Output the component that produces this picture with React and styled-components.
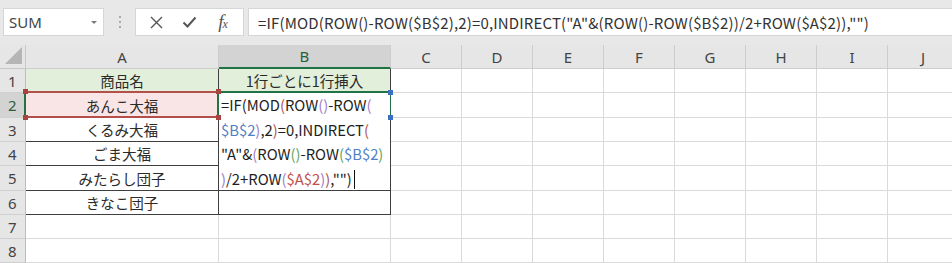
import React from "react";
import styled, { createGlobalStyle, css } from "styled-components";

const GREEN = "#217346";
const GRID = "#dadada";
const EDGE = "#3f3f3f";

const Global = createGlobalStyle`
  html, body {
    margin: 0;
    background: #ffffff;
    overflow: hidden;
  }
  body {
    font-family: "Noto Sans CJK JP", "Noto Sans", sans-serif;
    color: #222;
  }
`;

const Page = styled.div`
  width: 952px;
  height: 263px;
  overflow: hidden;
`;

const Toolbar = styled.div`
  display: flex;
  align-items: center;
  height: 45px;
  padding: 0 0 1px 3px;
  box-sizing: border-box;
  background: #e8e8e8;
`;

const Field = styled.div`
  display: flex;
  align-items: center;
  height: 28px;
  box-sizing: border-box;
  background: #ffffff;
  border: 1px solid #d6d6d6;
`;

const NameBox = styled(Field)`
  width: 101px;
  padding: 0 6px 0 5px;
  justify-content: space-between;
`;

const NameText = styled.span`
  font-family: "Noto Sans", sans-serif;
  font-size: 15px;
  color: #444;
`;

const DropArrow = styled.span`
  width: 0;
  height: 0;
  border-left: 3px solid transparent;
  border-right: 3px solid transparent;
  border-top: 3px solid #7a7a7a;
`;

const Grip = styled.div`
  width: 31px;
  display: flex;
  flex-direction: column;
  align-items: center;
  gap: 3px;

  span {
    width: 2px;
    height: 2px;
    background: #a8a8a8;
  }
`;

const FxBox = styled(Field)`
  width: 109px;
  justify-content: space-around;
  padding: 0 4px;
`;

const IconSlot = styled.span`
  width: 20px;
  display: flex;
  justify-content: center;
  color: #555;
`;

const FxGlyph = styled.span`
  font-family: "Liberation Serif", serif;
  font-style: italic;
  font-size: 19px;
  color: #555;
  letter-spacing: -1px;

  small {
    font-size: 12px;
  }
`;

const FormulaBox = styled(Field)`
  flex: 1;
  margin-left: 4px;
  padding-left: 9px;
  border-right: none;
  font-size: 15px;
  letter-spacing: 0.15px;
  color: #333;
  white-space: nowrap;
`;

const Sheet = styled.div`
  display: grid;
  grid-template-columns: 26px 193px 172px repeat(8, 71px);
  grid-template-rows: 24px 24px 25px 24px 24px 25px 24px 24px 24px;
  font-size: 14.5px;
`;

const headBase = css`
  display: flex;
  align-items: center;
  justify-content: center;
  box-sizing: border-box;
  font-family: "Noto Sans", sans-serif;
  font-size: 15px;
  color: #444;
`;

const Corner = styled.div`
  position: relative;
  background: #e6e6e6;
  border-right: 1px solid #c8c8c8;
  border-bottom: 1px solid #c8c8c8;

  &::after {
    content: "";
    position: absolute;
    right: 3px;
    bottom: 4px;
    border-left: 17px solid transparent;
    border-bottom: 17px solid #b5b5b5;
  }
`;

const ColHead = styled.div`
  ${headBase};
  background: ${(p) => (p.$active ? "#d3d3d3" : "#e6e6e6")};
  color: ${(p) => (p.$active ? "#2b5f3c" : "#444")};
  border-right: 1px solid #cdcdcd;
  border-bottom: ${(p) => (p.$active ? `2px solid ${GREEN}` : "1px solid #cdcdcd")};
`;

const RowHead = styled.div`
  ${headBase};
  justify-content: flex-start;
  padding-left: 8px;
  background: ${(p) => (p.$active ? "#d3d3d3" : "#e6e6e6")};
  color: ${(p) => (p.$active ? "#2b5f3c" : "#444")};
  border-right: ${(p) => (p.$active ? `2px solid ${GREEN}` : "1px solid #bdbdbd")};
  border-bottom: 1px solid #d0d0d0;
`;

const Cell = styled.div`
  position: relative;
  display: flex;
  align-items: center;
  justify-content: center;
  box-sizing: border-box;
  background: ${(p) => p.$fill || "#ffffff"};
  border-right: 1px solid ${(p) => (p.$boxed ? EDGE : GRID)};
  border-bottom: 1px solid ${(p) => (p.$boxed ? EDGE : GRID)};
  white-space: nowrap;
  color: #2a2a2a;
`;

const Handle = styled.i`
  position: absolute;
  width: 5px;
  height: 5px;
  background: ${(p) => p.$color};
  z-index: 3;
`;

const RefFrame = styled.span`
  position: absolute;
  left: -1px;
  right: -1px;
  top: -2px;
  bottom: -1px;
  border-top: 2px solid #b4504c;
  border-bottom: 2px solid #b4504c;
  z-index: 2;
`;

const Editor = styled.div`
  position: relative;
  grid-row: span 4;
  box-sizing: border-box;
  background: #ffffff;
  border-right: 1px solid ${EDGE};
  border-bottom: 1px solid ${EDGE};
  padding-left: 2px;
  font-size: 14.8px;
  line-height: 24.5px;
  color: #1e1e1e;
  white-space: nowrap;

  &::before {
    content: "";
    position: absolute;
    left: -2px;
    right: -2px;
    top: -2px;
    height: 26px;
    border: 2px solid ${GREEN};
    border-bottom: none;
    box-sizing: border-box;
  }
`;

const Line = styled.div`
  height: 24.5px;
`;

const Tok = styled.span`
  color: ${(p) => p.$c};
`;

const Caret = styled.span`
  display: inline-block;
  width: 1px;
  height: 19px;
  margin-left: 2px;
  background: #111;
  vertical-align: -4px;
`;

const C = {
  k: "#1e1e1e",
  m: "#b0544e",
  p: "#a07ccb",
  b: "#4f7fc6",
  g: "#5da65d",
  r: "#c0504d",
};

const lines = [
  [["=IF(MOD", "k"], ["(", "m"], ["ROW", "k"], ["()", "p"], ["-ROW", "k"], ["(", "p"]],
  [["$B$2", "b"], [")", "p"], [",2", "k"], [")", "m"], ["=0,INDIRECT", "k"], ["(", "m"]],
  [['"A"&', "k"], ["(", "p"], ["ROW", "k"], ["()", "g"], ["-ROW", "k"], ["(", "g"], ["$B$2", "b"], [")", "g"]],
  [[")", "p"], ["/2+ROW", "k"], ["(", "p"], ["$A$2", "r"], [")", "p"], [")", "m"], [',""', "k"], [")", "k"]],
];

const formula = '=IF(MOD(ROW()-ROW($B$2),2)=0,INDIRECT("A"&(ROW()-ROW($B$2))/2+ROW($A$2)),"")';

const letters = ["A", "B", "C", "D", "E", "F", "G", "H", "I", "J"];
const items = ["商品名", "あんこ大福", "くるみ大福", "ごま大福", "みたらし団子", "きなこ団子"];

const CrossIcon = () => (
  <svg width="13" height="13" viewBox="0 0 13 13">
    <path d="M1 1L12 12M12 1L1 12" stroke="#555" strokeWidth="1.4" fill="none" />
  </svg>
);

const CheckIcon = () => (
  <svg width="15" height="12" viewBox="0 0 15 12">
    <path d="M1.5 6.5L5.5 10.5L13.5 1.5" stroke="#555" strokeWidth="2" fill="none" />
  </svg>
);

function ColumnA({ row }) {
  if (row > 6) return <Cell />;
  if (row === 1) return <Cell $boxed $fill="#e2efda">{items[0]}</Cell>;
  if (row === 2)
    return (
      <Cell $boxed $fill="#f9e5e5">
        <RefFrame />
        <Handle $color="#a8443f" style={{ left: -3, top: -4 }} />
        <Handle $color="#a8443f" style={{ right: -3, top: -4 }} />
        <Handle $color="#a8443f" style={{ left: -3, bottom: -3 }} />
        <Handle $color="#a8443f" style={{ right: -3, bottom: -3 }} />
        {items[1]}
      </Cell>
    );
  return <Cell $boxed>{items[row - 1]}</Cell>;
}

function ColumnB({ row }) {
  if (row === 1)
    return (
      <Cell $boxed $fill="#e2efda">
        1行ごとに1行挿入
      </Cell>
    );
  if (row === 2)
    return (
      <Editor>
        {lines.map((ln, i) => (
          <Line key={i}>
            {ln.map(([t, c], j) => (
              <Tok key={j} $c={C[c]}>
                {t}
              </Tok>
            ))}
            {i === lines.length - 1 && <Caret />}
          </Line>
        ))}
        <Handle $color="#3b6fc4" style={{ right: -3, top: -3 }} />
        <Handle $color="#3b6fc4" style={{ right: -3, top: 22 }} />
      </Editor>
    );
  if (row >= 3 && row <= 5) return null;
  if (row === 6) return <Cell $boxed />;
  return <Cell />;
}

export default function App() {
  const rows = [1, 2, 3, 4, 5, 6, 7, 8];
  return (
    <Page>
      <Global />
      <Toolbar>
        <NameBox>
          <NameText>SUM</NameText>
          <DropArrow />
        </NameBox>
        <Grip>
          <span />
          <span />
          <span />
        </Grip>
        <FxBox>
          <IconSlot>
            <CrossIcon />
          </IconSlot>
          <IconSlot>
            <CheckIcon />
          </IconSlot>
          <IconSlot>
            <FxGlyph>
              f<small>x</small>
            </FxGlyph>
          </IconSlot>
        </FxBox>
        <FormulaBox>{formula}</FormulaBox>
      </Toolbar>
      <Sheet>
        <Corner />
        {letters.map((l) => (
          <ColHead key={l} $active={l === "B"}>
            {l}
          </ColHead>
        ))}
        {rows.map((r) => (
          <React.Fragment key={r}>
            <RowHead $active={r === 2}>{r}</RowHead>
            <ColumnA row={r} />
            <ColumnB row={r} />
            {letters.slice(2).map((l) => (
              <Cell key={l} />
            ))}
          </React.Fragment>
        ))}
      </Sheet>
    </Page>
  );
}
